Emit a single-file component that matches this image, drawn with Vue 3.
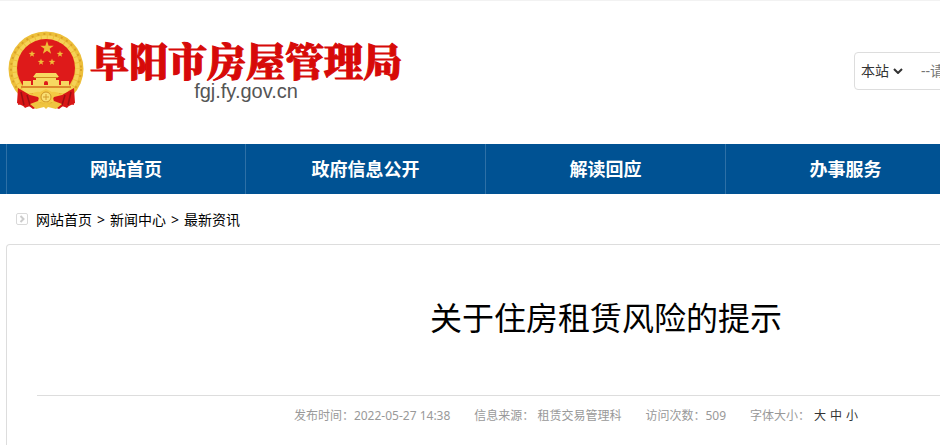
<template>
  <div class="page">
    <header class="wrap header">
      <a class="logo" href="#">
        <svg class="emblem" viewBox="0 0 76 80" aria-hidden="true">
          <path d="M12 60 L10 74 L14 73 L17 77 L21 75 L25 78 L30 76 L46 76 L51 78 L55 75 L59 77 L62 73 L66 74 L64 60Z" fill="#d31414" />
          <circle cx="38" cy="38" r="37.5" fill="#edbf3a" />
          <circle cx="38" cy="38" r="35" fill="none" stroke="#d9a128" stroke-width="2" stroke-dasharray="2 4" />
          <circle cx="38" cy="38" r="31.5" fill="none" stroke="#f5d257" stroke-width="4" stroke-dasharray="5 1" />
          <circle cx="38" cy="37" r="29" fill="#de1a1a" />
          <polygon v-for="star in stars" :key="star.id" :points="star.points" fill="#f0bb38" />
          <g fill="#f7d861">
            <path d="M28 42h20l3 4H25z" />
            <path d="M28 46h20v3h3v5H25v-5h3z" />
            <path d="M15 50h8v4h30v-4h8v5H15z" />
            <path d="M13 55h50l-4 7H17z" />
          </g>
          <path d="M26 46.500h24" stroke="#cf8a20" stroke-width="1" />
          <path d="M13 56h50" stroke="#d3701c" stroke-width="1.500" />
          <path d="M36 54v-2a2 2 0 0 1 4 0v2z" fill="#de1a1a" />
          <path d="M10 57 L22 64 L32 63 L29 74 L17 76 L9 72Z" fill="#d81616" />
          <path d="M66 57 L54 64 L44 63 L47 74 L59 76 L67 72Z" fill="#d81616" />
          <path d="M13 61l3 13M19 64l3 10M63 61l-3 13M57 64l-3 10" stroke="#9c1013" stroke-width="1.500" />
          <path d="M22 64q5-4 10-3l6-3 6 3q5-1 10 3l-8 2-3 5H33l-3-5z" fill="#f4c944" />
          <circle cx="38" cy="66" r="5" fill="#f9df73" stroke="#cf9426" />
          <path d="M38 63v6M35 66h6" stroke="#d39a2a" stroke-width="1" />
          <path d="M22 73l8-3 5 4 3-3 3 3 5-4 8 3-6 5-8-2-2 2-2-2-8 2z" fill="#efc440" />
        </svg>
        <span class="logo-text">
          <strong>阜阳市房屋管理局</strong>
          <span class="domain">fgj.fy.gov.cn</span>
        </span>
      </a>
      <form class="search" @submit.prevent>
        <span class="scope">
          <select v-model="scope" aria-label="搜索范围">
            <option>本站</option>
          </select>
          <svg class="arrow" viewBox="0 0 10 6" aria-hidden="true">
            <path d="M1 1l4 4 4-4" fill="none" stroke="#333" stroke-width="2" />
          </svg>
        </span>
        <input v-model="keyword" type="text" placeholder="--请输入关键字--" aria-label="关键字" />
      </form>
    </header>

    <nav class="nav">
      <ul class="wrap">
        <li v-for="item in menu" :key="item"><a href="#">{{ item }}</a></li>
      </ul>
    </nav>

    <div class="wrap crumbs">
      <svg class="crumb-icon" viewBox="0 0 12 12" aria-hidden="true">
        <rect x=".5" y=".5" width="11" height="11" rx="1.500" fill="none" stroke="#d9d9d9" />
        <path d="M4.500 3l3 3-3 3" fill="none" stroke="#ccc" stroke-width="2" />
      </svg>
      <template v-for="(crumb, i) in crumbs" :key="crumb">
        <span v-if="i > 0">&gt;</span>
        <a href="#">{{ crumb }}</a>
      </template>
    </div>

    <main class="wrap article">
      <h1>关于住房租赁风险的提示</h1>
      <div class="info">
        <span>发布时间：2022-05-27 14:38</span>
        <span>信息来源： 租赁交易管理科</span>
        <span>访问次数：509</span>
        <span class="sizes">
          <span>字体大小：</span>
          <button v-for="size in sizes" :key="size" type="button">{{ size }}</button>
        </span>
      </div>
    </main>
  </div>
</template>

<script setup>
import { ref } from 'vue'

const scope = ref('本站')
const keyword = ref('')

const menu = ['网站首页', '政府信息公开', '解读回应', '办事服务']
const crumbs = ['网站首页', '新闻中心', '最新资讯']
const sizes = ['大', '中', '小']

// 五角星顶点
const starPoints = (cx, cy, r) => {
  const points = []
  for (let i = 0; i < 10; i++) {
    const radius = i % 2 ? r * 0.4 : r
    const angle = (Math.PI / 5) * i - Math.PI / 2
    points.push(`${cx + radius * Math.cos(angle)},${cy + radius * Math.sin(angle)}`)
  }
  return points.join(' ')
}

const stars = [
  [39, 17, 7],
  [24, 23, 3.5],
  [52, 23, 3.5],
  [33, 31, 3.5],
  [44, 31, 3.5],
].map(([x, y, r], id) => ({ id, points: starPoints(x, y, r) }))
</script>

<style>
body {
  margin: 0;
  background: #fff;
}
</style>

<style scoped>
.page {
  overflow: hidden;
  border-top: 1px solid #f2f2f2;
  font-family: "Noto Sans", "Noto Sans CJK SC", sans-serif;
  font-size: 14px;
  color: #000;
}

a {
  color: inherit;
  text-decoration: none;
}

.wrap {
  box-sizing: border-box;
  width: 1200px;
  margin: 0 6px;
}

.header {
  display: flex;
  align-items: center;
  justify-content: space-between;
  height: 143px;
  padding: 0 0 4px 2px;
}

.logo {
  display: flex;
  align-items: center;
  gap: 6px;
}

.emblem {
  width: 76px;
  height: 80px;
}

.logo-text {
  display: flex;
  flex-direction: column;
  align-items: center;
}

.logo-text strong {
  font-family: "Noto Serif CJK SC", "Noto Sans CJK SC", serif;
  font-size: 39px;
  font-weight: 900;
  line-height: 40px;
  color: #d70a08;
  -webkit-text-stroke: 1px #d70a08;
}

.domain {
  font-family: "Liberation Sans", Arial, sans-serif;
  font-size: 20px;
  line-height: 24px;
  color: #555;
}

.search {
  display: flex;
  box-sizing: border-box;
  width: 352px;
  height: 38px;
  padding: 0 6px;
  border: 1px solid #ddd;
  border-radius: 4px;
}

.scope {
  display: flex;
  align-items: center;
  gap: 4px;
}

.search select,
.search input {
  padding: 0;
  border: 0;
  outline: 0;
  background: none;
  font: inherit;
  color: #333;
}

.search select {
  appearance: none;
}

.search input {
  flex: 1;
  margin-left: 18px;
}

.search input::placeholder {
  color: #757575;
}

.arrow {
  width: 10px;
  height: 6px;
}

.nav {
  background: #005293;
}

.nav ul {
  display: flex;
  padding: 0;
  list-style: none;
}

.nav li {
  box-sizing: border-box;
  width: 20%;
  border-right: 1px solid #2d70a6;
  text-align: center;
}

.nav li:first-child {
  border-left: 1px solid #2d70a6;
}

.nav a {
  display: block;
  font-size: 18px;
  font-weight: 700;
  line-height: 50px;
  color: #fff;
}

.crumbs {
  display: flex;
  align-items: center;
  gap: 5px;
  height: 50px;
  padding-left: 10px;
}

.crumb-icon {
  width: 12px;
  height: 12px;
  margin-right: 3px;
}

.article {
  min-height: 201px;
  padding: 48px 30px 0;
  border: 1px solid #ddd;
  border-bottom: 0;
  border-radius: 4px 4px 0 0;
}

h1 {
  margin: 0;
  padding-bottom: 52px;
  border-bottom: 1px solid #ddd;
  font-size: 32px;
  font-weight: 400;
  line-height: 50px;
  text-align: center;
}

.info {
  display: flex;
  justify-content: center;
  gap: 24px;
  padding-right: 60px;
  font-size: 12px;
  line-height: 40px;
  color: #999;
}

.info button {
  padding: 0;
  border: 0;
  background: none;
  font: inherit;
  color: #333;
}

.sizes {
  display: flex;
  gap: 4px;
}
</style>
